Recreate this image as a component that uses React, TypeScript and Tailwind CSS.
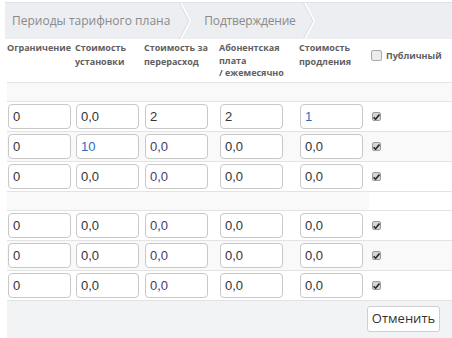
import React from "react";

const cols = "grid grid-cols-[68px_69px_75px_80px_70px_1fr]";

type Cell = { v: string; c?: string };

const group1: Cell[][] = [
  [{ v: "0" }, { v: "0,0" }, { v: "2" }, { v: "2" }, { v: "1", c: "text-[#2a6cc0]" }],
  [{ v: "0" }, { v: "10", c: "text-[#2a6cc0]" }, { v: "0,0", c: "text-[#4a3a6e]" }, { v: "0,0" }, { v: "0,0" }],
  [{ v: "0" }, { v: "0,0" }, { v: "0,0", c: "text-[#4a3a6e]" }, { v: "0,0" }, { v: "0,0" }],
];
const group2: Cell[][] = [
  [{ v: "0" }, { v: "0,0" }, { v: "0,0", c: "text-[#4a3a6e]" }, { v: "0,0" }, { v: "0,0" }],
  [{ v: "0" }, { v: "0,0" }, { v: "0,0", c: "text-[#4a3a6e]" }, { v: "0,0" }, { v: "0,0" }],
  [{ v: "0" }, { v: "0,0" }, { v: "0,0", c: "text-[#4a3a6e]" }, { v: "0,0" }, { v: "0,0" }],
];

function Chevron() {
  return (
    <svg width="14" height="36" viewBox="0 0 14 36" className="shrink-0">
      <polyline points="1,-1 11,18 1,37" fill="none" stroke="#dde1e6" strokeWidth="3" />
      <polyline points="1.5,-1 11.5,18 1.5,37" fill="none" stroke="#ffffff" strokeWidth="1.6" />
    </svg>
  );
}

function Check() {
  return (
    <span className="flex h-[9px] w-[9px] items-center justify-center rounded-[2px] border border-[#9a9a9a] bg-[#d6d6d6]">
      <svg width="7" height="6" viewBox="0 0 7 6">
        <path d="M0.6 3.2 L2.6 5.2 L6.4 0.6" fill="none" stroke="#2b2b2b" strokeWidth="1.6" />
      </svg>
    </span>
  );
}

function Row({ cells, bg }: { cells: Cell[]; bg: string }) {
  return (
    <div className={`${cols} h-[30px] border-b border-[#e3e3e3] ${bg}`}>
      {cells.map((cell, i) => (
        <div key={i} className="flex items-center pl-[1px]">
          <div
            className={`flex h-[25px] w-[63px] items-center rounded-[4px] border border-[#c8c8c8] bg-white pl-[4px] text-[13px] ${cell.c ?? "text-[#333333]"}`}
            style={{ fontFamily: '"Liberation Sans", Arial, sans-serif' }}
          >
            {cell.v}
          </div>
        </div>
      ))}
      <div className="flex items-center pl-[3px]">
        <Check />
      </div>
    </div>
  );
}

export default function App() {
  return (
    <div
      className="h-[338px] w-[452px] overflow-hidden bg-white pt-[2px]"
      style={{ fontFamily: '"Open Sans", sans-serif' }}
    >
      <div className="ml-[5px] flex h-[37px] items-center border-t border-[#dde1e6] bg-[#eceef1] text-[12px] text-[#8a8a8a]">
        <span className="pl-[7px]">Периоды тарифного плана</span>
        <span className="ml-[9px]">
          <Chevron />
        </span>
        <span className="ml-[11px] tracking-[-0.2px]">Подтверждение</span>
        <span className="ml-[7px]">
          <Chevron />
        </span>
      </div>
      <div className="ml-[7px]">
        <div className={`${cols} h-[44px] border-b border-[#e3e3e3] text-[9px] font-bold leading-[14px] text-[#5f5f5f]`}>
          <div className="pt-[2px]">Ограничение</div>
          <div className="pt-[2px]">
            Стоимость
            <br />
            установки
          </div>
          <div className="pt-[2px]">
            Стоимость за
            <br />
            перерасход
          </div>
          <div className="pt-[3px] leading-[12.5px]">
            Абонентская
            <br />
            плата
            <br />/ ежемесячно
          </div>
          <div className="pt-[2px]">
            Стоимость
            <br />
            продления
          </div>
          <div className="flex items-start gap-[4px] pl-[2px] pt-[10px]">
            <span className="mt-[1px] h-[11px] w-[11px] rounded-[2px] border border-[#a8a8a8] bg-[#ececec]" />
            <span>Публичный</span>
          </div>
        </div>
        <div className="h-[19px] border-b border-[#e3e3e3] bg-[#f9f9f9]" />
        {group1.map((r, i) => (
          <Row key={i} cells={r} bg={i % 2 === 1 ? "bg-[#f9f9f9]" : "bg-white"} />
        ))}
        <div className={`${cols} h-[19px] border-b border-[#e3e3e3]`}>
          <div className="col-span-5 bg-[#f9f9f9]" />
          <div className="bg-white" />
        </div>
        {group2.map((r, i) => (
          <Row key={i} cells={r} bg={i % 2 === 1 ? "bg-[#f9f9f9]" : "bg-white"} />
        ))}
        <div className="flex h-[40px] justify-end bg-[#f1f3f5] pr-[12px] pt-[5px]">
          <button className="h-[26px] w-[73px] rounded-[3px] border border-[#cfcfcf] bg-white text-[13px] text-[#333333]">
            Отменить
          </button>
        </div>
      </div>
    </div>
  );
}
